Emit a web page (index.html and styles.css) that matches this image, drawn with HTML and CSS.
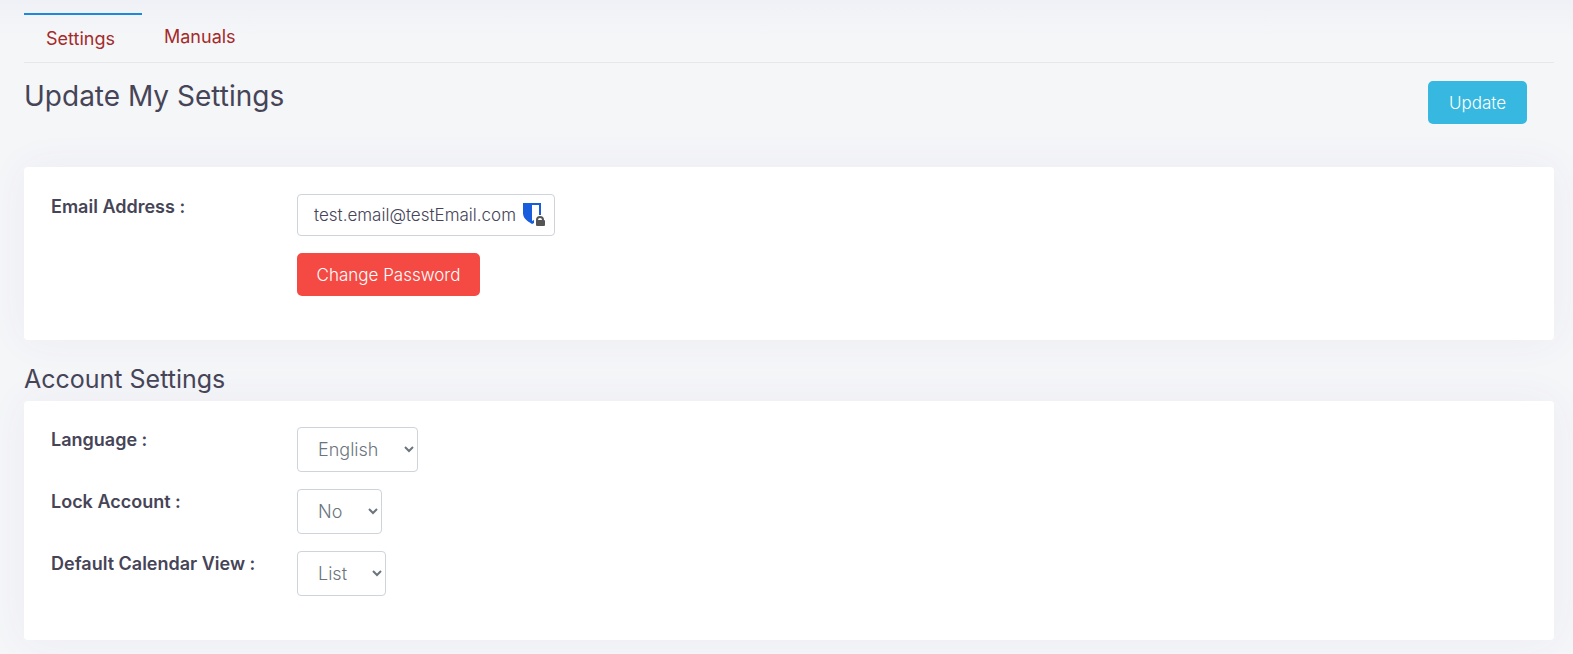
FILE: index.html
```
<!DOCTYPE html>
<html lang="en">
<head>
    <meta charset="UTF-8">
    <meta name="viewport" content="width=device-width, initial-scale=1.0">
    <title>Update My Settings</title>
    <link rel="stylesheet" href="styles.css">
</head>
<body>
    <nav class="tabs">
        <a href="#settings" class="tab active">Settings</a>
        <a href="#manuals" class="tab">Manuals</a>
    </nav>

    <form class="settings-form">
        <div class="page-header">
            <h1>Update My Settings</h1>
            <button type="submit" class="btn btn-info">Update</button>
        </div>

        <div class="card">
            <div class="form-row">
                <label for="email">Email Address :</label>
                <div class="field">
                    <div class="email-box">
                        <input type="text" id="email" value="test.email@testEmail.com">
                        <svg class="vault-icon" width="24" height="24" viewBox="0 0 24 24" aria-hidden="true">
                            <path fill="#175ddc" d="M1 0h18v12h-2V2h-7v19C5 18 1 15 1 10z"/>
                            <path fill="#175ddc" d="M10 18l2-1v3l-2 1z"/>
                            <path fill="none" stroke="#555" stroke-width="2" d="M15 18v-1a3 3 0 0 1 6 0v1"/>
                            <rect x="14" y="17" width="9" height="6" rx="1" fill="#555"/>
                        </svg>
                    </div>
                    <button type="button" class="btn btn-danger">Change Password</button>
                </div>
            </div>
        </div>

        <h2>Account Settings</h2>
        <div class="card account-card">
            <div class="form-row">
                <label for="language">Language :</label>
                <select id="language" class="select-language">
                    <option>English</option>
                    <option>French</option>
                </select>
            </div>
            <div class="form-row">
                <label for="lock">Lock Account :</label>
                <select id="lock" class="select-lock">
                    <option>No</option>
                    <option>Yes</option>
                </select>
            </div>
            <div class="form-row">
                <label for="calendar">Default Calendar View :</label>
                <select id="calendar" class="select-calendar">
                    <option>List</option>
                    <option>Day</option>
                </select>
            </div>
        </div>
    </form>
</body>
</html>
```
FILE: styles.css
```
* { box-sizing: border-box; }
body { font-family: Inter, "Open Sans", sans-serif; font-size: 18px; line-height: 24px; color: #464457; background: #f5f6f8 linear-gradient(#f0f1f6, #f5f6f8 36px) no-repeat; margin: 0; padding: 13px 19px 14px 24px; }
.tabs { display: flex; align-items: flex-start; height: 50px; border-bottom: 1px solid #e6e8ea; }
.tab { min-width: 118px; padding: 12px 22px; color: #a52a2a; text-decoration: none; }
.tab.active { border-top: 2px solid #1e88dd; }

.page-header { display: flex; justify-content: space-between; align-items: flex-start; padding: 18px 27px 43px 0; }
h1, h2 { font-weight: 400; margin: 0; }
h1 { font-size: 28px; line-height: 30px; }
h2 { font-size: 25px; line-height: 28px; margin: 25px 0 8px; }

.card { background: #fff; border-radius: 4px; padding: 27px; box-shadow: 0 0 40px rgba(82, 63, 165, 0.06); }
.form-row { display: grid; grid-template-columns: 246px auto; justify-content: start; align-items: start; margin-bottom: 17px; }
.form-row label { padding-top: 1px; font-weight: 600; }
.field { display: flex; flex-direction: column; align-items: flex-start; gap: 17px; }
.account-card { padding: 26px 27px 27px; }

.btn { height: 43px; padding: 0 18px; border: 0; border-radius: 5px; font: inherit; font-size: 17px; font-weight: 300; color: #fff; }
.btn-info { min-width: 99px; background: #36b8e0; }
.btn-danger { min-width: 183px; background: #f44a43; }

.email-box { position: relative; width: 258px; }
.email-box input { width: 100%; height: 42px; padding: 0 16px; border: 1px solid #ced4da; border-radius: 4px; font: inherit; font-size: 17px; font-weight: 300; color: #464457; }
.vault-icon { position: absolute; top: 9px; right: 9px; }

select { height: 45px; padding: 0 1px 0 16px; border: 1px solid #ced4da; border-radius: 4px; background: #fff; font: inherit; font-weight: 300; color: #6c757d; }
.select-language { width: 121px; }
.select-lock { width: 85px; }
.select-calendar { width: 89px; }
```
